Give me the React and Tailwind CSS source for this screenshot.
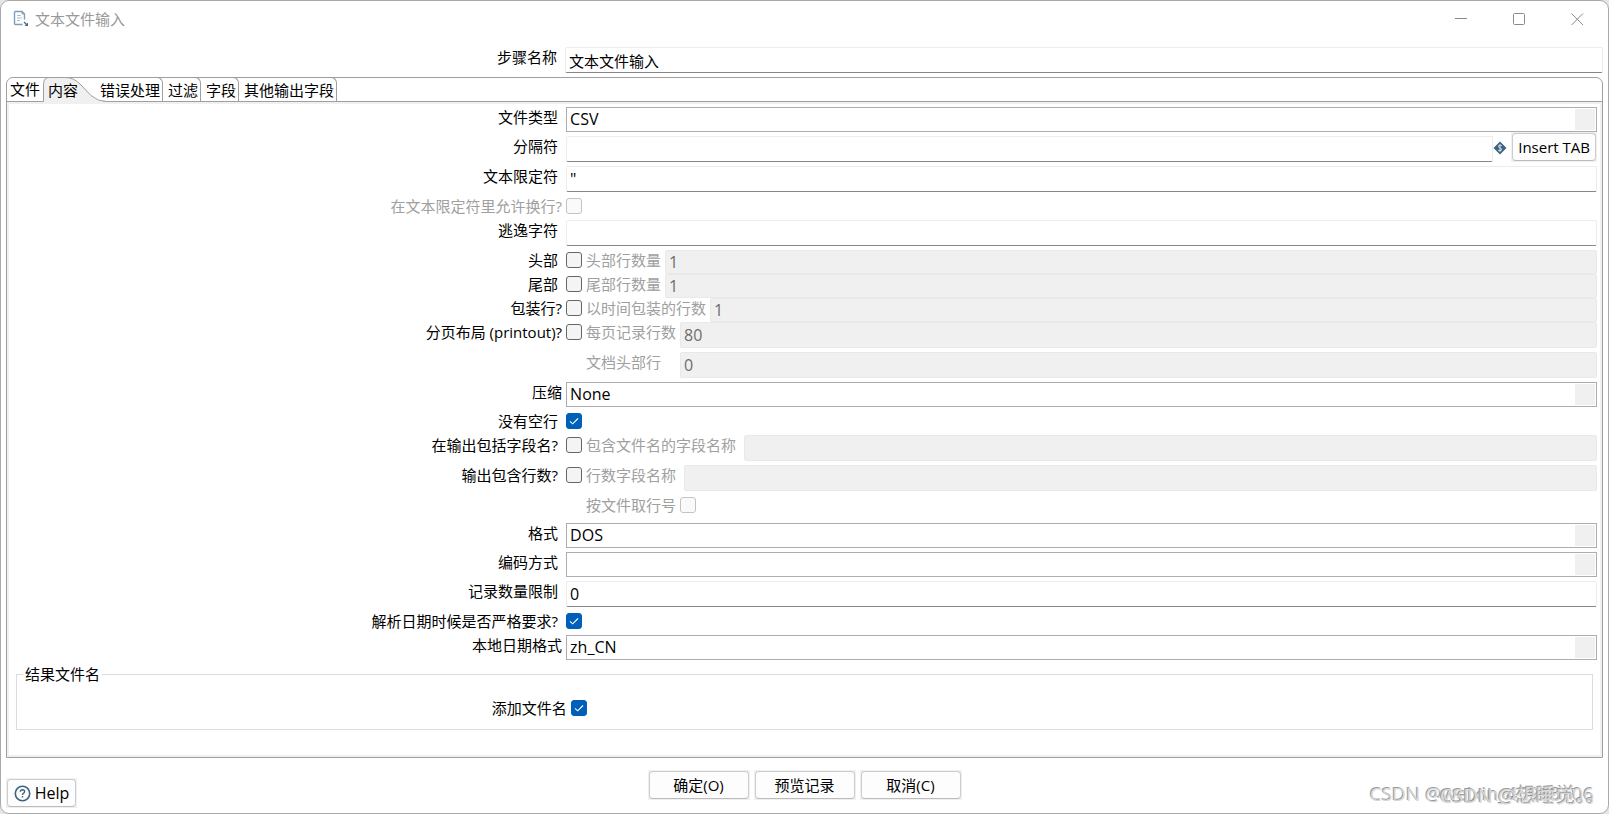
import { useState } from 'react';
import clsx from 'clsx';

const tabs = ['文件', '内容', '错误处理', '过滤', '字段', '其他输出字段'];

function WindowButton({ label, children }) {
  return (
    <button aria-label={label} className="w-[58px] h-9 flex items-center justify-center">
      <svg width="13" height="13" viewBox="0 0 13 13" fill="none" stroke="#8a8a8a">
        {children}
      </svg>
    </button>
  );
}

function TitleBar() {
  return (
    <header className="flex items-center h-9 pl-3 pr-0.5">
      <svg width="17" height="18" viewBox="0 0 17 18" fill="none" className="mr-[5px]">
        <path d="M1.5 2.5a1 1 0 0 1 1-1h6.5l2.5 2.5v5.5M1.5 2.5v11a1 1 0 0 0 1 1h7" stroke="#7f9db5" strokeWidth="1.4" />
        <path d="M9 1.5V4h2.5" stroke="#7f9db5" />
        <path d="M4 5.5h4M4 8h5M4 10.5h3" stroke="#a9bfd0" />
        <path d="M11 12l2.5 2.5" stroke="#3f6a8a" strokeWidth="1.2" />
        <path d="M15 12.5V16h-3.5z" fill="#3f6a8a" />
      </svg>
      <h1 className="flex-1 text-[#999]">文本文件输入</h1>
      <WindowButton label="最小化">
        <path d="M0 5.5h12" />
      </WindowButton>
      <WindowButton label="最大化">
        <rect x="0.5" y="0.5" width="11" height="11" rx="1" />
      </WindowButton>
      <WindowButton label="关闭">
        <path d="M0.5 0.5l11.5 11.5M12 0.5L0.5 12" />
      </WindowButton>
    </header>
  );
}

function Row({ label, htmlFor, disabled, tight, className = 'min-h-5 mb-1', children }) {
  return (
    <div className={clsx('flex items-start', className)}>
      <div
        className={clsx(
          'w-[35%] shrink-0 text-right leading-5',
          tight ? 'pr-1' : 'pr-2',
          disabled && 'text-[#a0a0a0]'
        )}
      >
        {label && <label htmlFor={htmlFor}>{label}</label>}
      </div>
      <div className="flex flex-1 min-w-0 items-start">{children}</div>
    </div>
  );
}

function TextField({ id, value = '', disabled, short, label, className = 'text-base' }) {
  return (
    <input
      id={id}
      type="text"
      defaultValue={value}
      disabled={disabled}
      aria-label={label}
      className={clsx(
        'flex-1 min-w-0 px-[3px] border rounded-[2px] outline-none',
        className,
        short ? 'h-6' : 'h-[26px]',
        disabled
          ? 'bg-[#f0f0f0] border-[#e9e9e9] text-[#6d6d6d]'
          : 'bg-white border-[#ececec] border-b-[#868686]'
      )}
    />
  );
}

function Combo({ id, options }) {
  return (
    <div className="flex flex-1 min-w-0 h-[25px] p-px border border-[#acacb2] bg-white">
      <select id={id} className="flex-1 min-w-0 pl-0.5 pb-0.5 text-base leading-5 appearance-none outline-none bg-transparent">
        {options.map((o) => (
          <option key={o}>{o}</option>
        ))}
      </select>
      <span className="w-5 bg-[#f0f0f0]" />
    </div>
  );
}

function Check({ id, checked = false, disabled }) {
  const [on, setOn] = useState(checked);
  return (
    <span className="relative w-4 h-4 mt-0.5 shrink-0">
      <input
        id={id}
        type="checkbox"
        checked={on}
        disabled={disabled}
        onChange={(e) => setOn(e.target.checked)}
        className={clsx(
          'block w-4 h-4 appearance-none border rounded-[3px]',
          on && 'bg-[#005fb8] border-[#005fb8]',
          !on && (disabled ? 'bg-[#fafafa] border-[#c3c3c3]' : 'bg-[#f4f4f4] border-[#666]')
        )}
      />
      {on && (
        <svg className="absolute inset-0 pointer-events-none" width="16" height="16" viewBox="0 0 16 16" fill="none">
          <path d="M4 8.3l2.7 2.5L12 5.5" stroke="#fff" strokeWidth="1.1" />
        </svg>
      )}
    </span>
  );
}

function SubLabel({ htmlFor, className = 'mr-1', children }) {
  return (
    <label htmlFor={htmlFor} className={clsx('ml-1 shrink-0 min-w-[75px] leading-5 text-[#a0a0a0]', className)}>
      {children}
    </label>
  );
}

function PushButton({ className, children }) {
  return (
    <span className="flex shrink-0 p-px bg-[#f0f0f0]">
      <button
        className={clsx(
          'flex items-center justify-center h-7 border border-[#ccc] border-b-[#bbb] rounded-[4px] bg-[#fdfdfd] whitespace-nowrap',
          className
        )}
      >
        {children}
      </button>
    </span>
  );
}

function TabBar() {
  return (
    <div role="tablist" className="flex h-6 border-b border-[#9f9f9f]">
      {tabs.map((tab) =>
        tab === '内容' ? (
          <button key={tab} role="tab" aria-selected="true" className="relative -mt-px h-[25px] pl-[5px] pr-[22px]">
            <svg className="absolute left-0 top-0" width="64" height="25" viewBox="0 0 64 25" fill="none">
              <path d="M0.5 25V6.5Q1 0.5 6 0.5H23Q31 0.5 38 8L48 18.5Q55 24.5 63 24.5V25z" fill="#f0f0f0" />
              <path d="M0.5 24.5V6.5Q1 0.5 6 0.5H23Q31 0.5 38 8L48 18.5Q55 24.5 63 24.5" stroke="#9f9f9f" />
            </svg>
            <span className="relative">{tab}</span>
          </button>
        ) : (
          <button
            key={tab}
            role="tab"
            aria-selected="false"
            className={clsx(
              '-mt-px h-6 border-[#9f9f9f]',
              tab === '文件' ? 'px-[3px]' : 'border-t border-r rounded-tr-[6px] pr-0.5',
              tab !== '文件' && tab !== '错误处理' && 'pl-[5px]'
            )}
          >
            {tab}
          </button>
        )
      )}
    </div>
  );
}

function ContentPanel() {
  return (
    <div className="border-2 border-[#f0f0f0] pt-[3px] pb-[25px]">
      <div className="pl-0.5 pr-[3px]">
        <Row label="文件类型" htmlFor="type" className="mb-1">
          <Combo id="type" options={['CSV', 'Fixed']} />
        </Row>
        <Row label="分隔符" htmlFor="separator" className="mb-1 h-[26px]">
          <TextField id="separator" />
          <svg width="14" height="14" viewBox="0 0 14 14" className="mt-[5px] mr-1">
            <path d="M7 0.5L13.5 7 7 13.5 0.5 7z" fill="#3d6480" />
            <path d="M8.9 4.8Q7 3.6 5.6 4.7Q5 6.2 7 6.9Q9.2 7.6 8.5 9.1Q7 10.3 5 9.1M7 3v8" fill="none" stroke="#dfe8ee" strokeWidth="0.9" />
          </svg>
          <div className="-mt-1">
            <PushButton className="px-[5px]">Insert TAB</PushButton>
          </div>
        </Row>
        <Row label="文本限定符" htmlFor="enclosure" className="mb-1">
          <TextField id="enclosure" value={'"'} />
        </Row>
        <Row label="在文本限定符里允许换行?" htmlFor="breaks" disabled tight className="h-5 mb-1">
          <Check id="breaks" disabled />
        </Row>
        <Row label="逃逸字符" htmlFor="escape" className="mb-1">
          <TextField id="escape" />
        </Row>

        {/* Header, footer, wrapping and paging */}
        <Row label="头部" htmlFor="header" className="h-6">
          <Check id="header" />
          <SubLabel htmlFor="headerLines">头部行数量</SubLabel>
          <TextField id="headerLines" value="1" disabled short />
        </Row>
        <Row label="尾部" htmlFor="footer" className="h-6">
          <Check id="footer" />
          <SubLabel htmlFor="footerLines">尾部行数量</SubLabel>
          <TextField id="footerLines" value="1" disabled short />
        </Row>
        <Row label="包装行?" htmlFor="wrapped" tight className="h-6">
          <Check id="wrapped" />
          <SubLabel htmlFor="wraps">以时间包装的行数</SubLabel>
          <TextField id="wraps" value="1" disabled short />
        </Row>
        <Row label="分页布局 (printout)?" htmlFor="paged" tight className="mb-1">
          <Check id="paged" />
          <SubLabel htmlFor="pageLines">每页记录行数</SubLabel>
          <TextField id="pageLines" value="80" disabled />
        </Row>
        <Row className="mb-1">
          <span className="w-4" />
          <SubLabel htmlFor="docLines" className="w-[90px] mr-1">文档头部行</SubLabel>
          <TextField id="docLines" value="0" disabled />
        </Row>
        <Row label="压缩" htmlFor="compression" tight className="mb-1">
          <Combo id="compression" options={['None', 'Zip', 'GZip']} />
        </Row>

        {/* Extra output columns */}
        <Row label="没有空行" htmlFor="noEmpty" className="h-5 mb-1">
          <Check id="noEmpty" checked />
        </Row>
        <Row label="在输出包括字段名?" htmlFor="inclName" className="mb-1">
          <Check id="inclName" />
          <SubLabel htmlFor="nameField" className="mr-2">包含文件名的字段名称</SubLabel>
          <TextField id="nameField" disabled />
        </Row>
        <Row label="输出包含行数?" htmlFor="inclRow" className="mb-1">
          <Check id="inclRow" />
          <SubLabel htmlFor="rowField" className="mr-2">行数字段名称</SubLabel>
          <TextField id="rowField" disabled />
        </Row>
        <Row className="h-6 mb-1">
          <span className="w-4" />
          <SubLabel htmlFor="byFile">按文件取行号</SubLabel>
          <Check id="byFile" disabled />
        </Row>

        <Row label="格式" htmlFor="format" className="mb-1">
          <Combo id="format" options={['DOS', 'Unix', 'mixed']} />
        </Row>
        <Row label="编码方式" htmlFor="encoding" className="mb-1">
          <Combo id="encoding" options={['', 'UTF-8', 'GBK']} />
        </Row>
        <Row label="记录数量限制" htmlFor="limit" className="mb-1">
          <TextField id="limit" value="0" />
        </Row>
        <Row label="解析日期时候是否严格要求?" htmlFor="lenient" className="h-5 mb-1">
          <Check id="lenient" checked />
        </Row>
        <Row label="本地日期格式" htmlFor="locale" tight className="mb-1">
          <Combo id="locale" options={['zh_CN', 'en_US']} />
        </Row>
      </div>

      <fieldset className="mx-[7px] pl-1 pt-3.5 pb-[11px] border border-[#dcdcdc]">
        <legend className="ml-0.5 px-0.5 leading-5">结果文件名</legend>
        <Row label="添加文件名" htmlFor="addResult" tight className="h-5">
          <Check id="addResult" checked />
        </Row>
      </fieldset>
    </div>
  );
}

function Watermark() {
  return (
    <div
      aria-hidden="true"
      className="absolute right-[14px] bottom-[5px] text-[19px] leading-7 whitespace-nowrap pointer-events-none text-[#d6d6d6] [text-shadow:-1px_-1px_0_#9a9a9a]"
    >
      <span>CSDN @weixin_45963106</span>
      <span className="absolute -right-3 top-0.5 text-xl leading-7">CSDN @想睡觉。。</span>
    </div>
  );
}

export default function App() {
  return (
    <div className="min-h-screen bg-[#e6e6e6] font-['Open_Sans','Noto_Sans_CJK_SC',sans-serif] text-[15px] leading-5 text-black">
      <div className="relative flex flex-col min-h-screen overflow-hidden bg-white border border-[#a9a9a9] rounded-[9px]">
        <TitleBar />

        <main className="flex flex-1 flex-col px-[5px] pb-[5px]">
          <Row label="步骤名称" htmlFor="stepName" className="mt-2.5 mb-1">
            <TextField id="stepName" value="文本文件输入" className="text-[15px]" />
          </Row>

          <section className="border border-[#9f9f9f] rounded-t-[7px]">
            <TabBar />
            <ContentPanel />
          </section>

          <footer className="grid grid-cols-[1fr_auto_1fr] flex-1 pt-3">
            <div className="flex items-end">
              <PushButton className="w-[69px] gap-1">
                <svg width="17" height="17" viewBox="0 0 17 17" fill="none" stroke="#3d6480">
                  <circle cx="8.5" cy="8.5" r="7.2" strokeWidth="1.6" />
                  <path d="M6.3 6.8Q6.4 4.8 8.5 4.8Q10.7 4.9 10.6 6.7Q10.5 7.7 9.3 8.3Q8.5 8.8 8.5 9.9M8.5 11v1.5" strokeWidth="1.4" />
                </svg>
                <span className="text-base leading-5">Help</span>
              </PushButton>
            </div>
            <div className="flex items-start gap-1">
              <PushButton className="w-[100px]">确定(O)</PushButton>
              <PushButton className="w-[100px]">预览记录</PushButton>
              <PushButton className="w-[100px]">取消(C)</PushButton>
            </div>
          </footer>
        </main>

        <Watermark />
      </div>
    </div>
  );
}
